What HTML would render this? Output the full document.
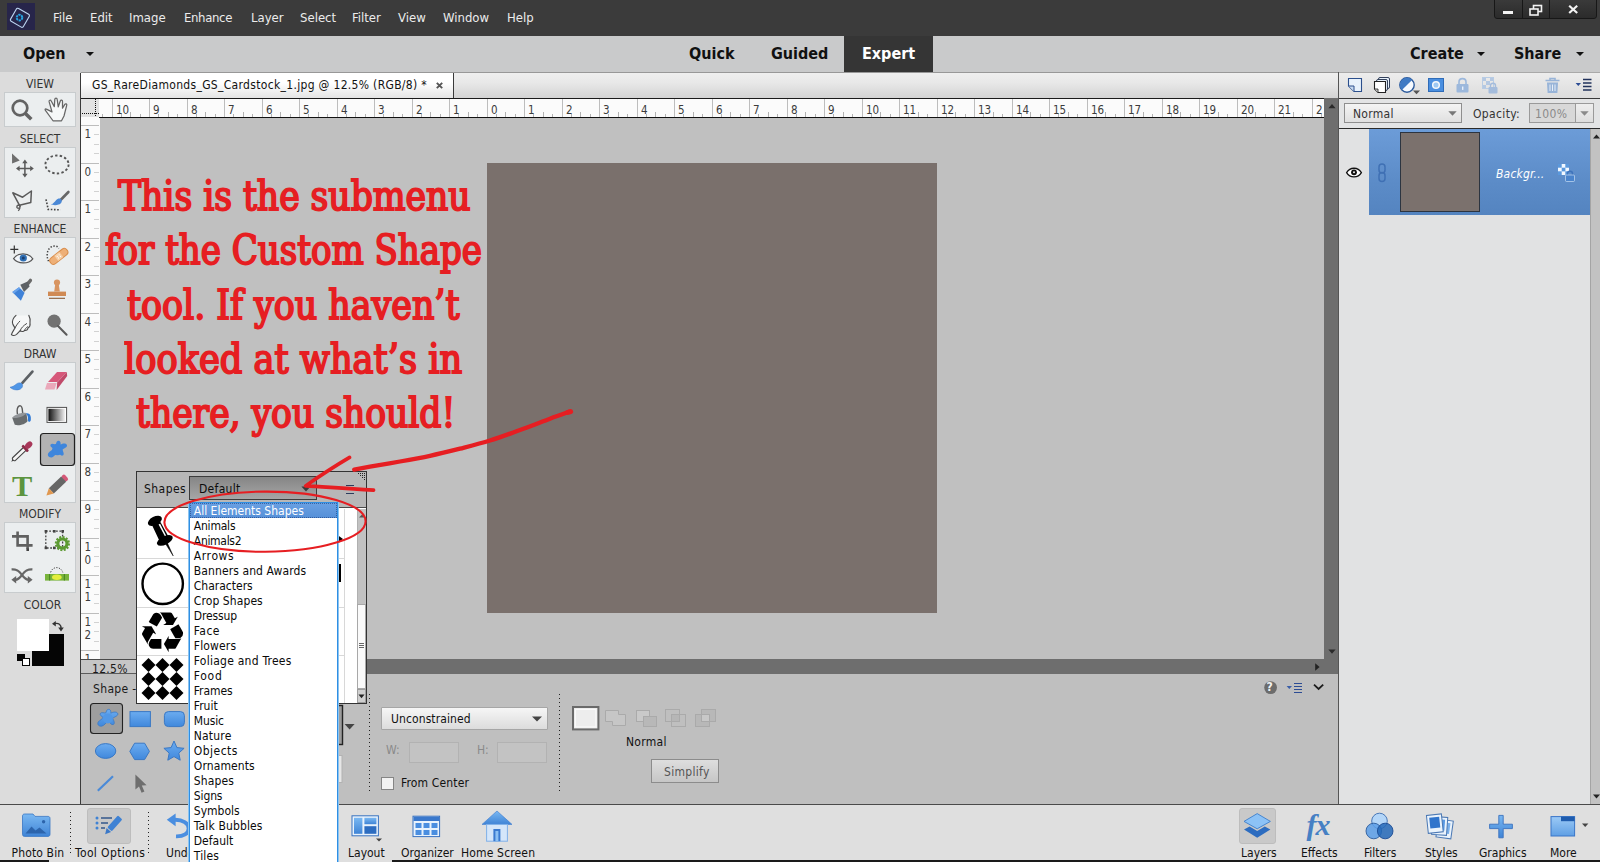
<!DOCTYPE html>
<html><head><meta charset="utf-8"><title>Photoshop Elements - Custom Shape submenu</title>
<style>
*{box-sizing:border-box;margin:0;padding:0}
html,body{width:1600px;height:862px;overflow:hidden;background:#bababa}
body{position:relative;font-family:"DejaVu Sans Condensed","Liberation Sans",sans-serif;font-size:12px;color:#1a1a1a}
.a{position:absolute}
.t{position:absolute;white-space:nowrap;line-height:14px}
svg{position:absolute;overflow:visible}
/* ---- top bars ---- */
#menubar{left:0;top:0;width:1600px;height:36px;background:#3b3b3b}
#menubar .t{color:#ececec;font-size:13px;top:10px;line-height:15px}
#modebar{left:0;top:36px;width:1600px;height:36px;background:#c9cacb}
#modebar .t{font-family:"DejaVu Sans Condensed","Liberation Sans",sans-serif;font-weight:bold;font-size:16px;line-height:20px;top:8px;color:#111}
.dn{position:absolute;width:0;height:0;border-left:4px solid transparent;border-right:4px solid transparent;border-top:4px solid #111}
/* ---- left toolbar ---- */
#toolbar{left:0;top:72px;width:81px;height:732px;background:#dcdcdc;border-right:1px solid #c4c4c4}
#toolbar .lbl{position:absolute;left:0;width:80px;text-align:center;font-size:12px;line-height:14px;color:#333}
#toolbar .grp{position:absolute;left:4px;width:72px;background:#ebeeef;border:1px solid #c8ccce}
/* ---- doc area ---- */
#tabbar{left:81px;top:72px;width:1257px;height:26px;background:linear-gradient(#efefef 0%,#e8e8e8 40%,#d3d3d3 100%);border-top:1px solid #989898}
#doctab{left:0;top:0;width:373px;height:25px;background:linear-gradient(#ffffff 40%,#e4e4e4);border-right:1px solid #3a3a3a}
#canvas{left:100px;top:118px;width:1224px;height:541px;background:#c0c0c0}
#photo{left:487px;top:163px;width:450px;height:450px;background:#7a706c}
#vscroll{left:1324px;top:98px;width:14px;height:562px;background:#6e6e6e}
#hstatus{left:81px;top:659px;width:1257px;height:15px;background:#6e6e6e}
#options{left:81px;top:674px;width:1257px;height:130px;background:#bfbfbf}
/* ---- right panel ---- */
#panel{left:1338px;top:72px;width:262px;height:732px;background:#e1e2e3;border-left:1px solid #555}
.li{left:3.8px;font-size:12px;letter-spacing:0;line-height:15px;color:#0a0a0a;margin-top:1px}
.red{font-family:"DejaVu Serif Condensed","DejaVu Serif","Liberation Serif",serif;font-weight:normal;-webkit-text-stroke:1.9px #e61e22;font-size:41px;line-height:50px;color:#e61e22;transform-origin:0 0}
/* ---- bottom bar ---- */
#taskbar{left:0;top:804px;width:1600px;height:58px;background:#dfdfdf;border-top:1px solid #4a4a4a}
.tk{top:846px;font-size:12px;letter-spacing:0;color:#111}
</style></head>
<body>
<!--MENUBAR-->
<div id="menubar" class="a">
<div class="a" style="left:7px;top:3px;width:28px;height:27px;background:#27254a"></div>
<svg style="left:7px;top:3px" width="28" height="27" viewBox="0 0 28 27"><rect x="-7.4" y="-7.4" width="14.8" height="14.8" rx="1.6" fill="none" stroke="#bcd6f2" stroke-width="1.1" transform="translate(12.9 14.8) rotate(30)"/><circle cx="12.5" cy="14.6" r="2.8" fill="none" stroke="#27a5e2" stroke-width="2" stroke-dasharray="2.2 .73"/></svg>
<span class="t" style="left:53px">File</span><span class="t" style="left:90px">Edit</span><span class="t" style="left:129px">Image</span><span class="t" style="left:184px;letter-spacing:-.35px">Enhance</span><span class="t" style="left:251px">Layer</span><span class="t" style="left:300px">Select</span><span class="t" style="left:352px">Filter</span><span class="t" style="left:398px">View</span><span class="t" style="left:443px">Window</span><span class="t" style="left:507px">Help</span>
<div class="a" style="left:1494px;top:-1px;width:103px;height:20px;background:linear-gradient(#3a3a3a,#2b2b2b);border:1px solid #171717;border-radius:0 0 3px 3px"></div>
<div class="a" style="left:1522px;top:0;width:1px;height:18px;background:#171717"></div><div class="a" style="left:1549px;top:0;width:1px;height:18px;background:#171717"></div>
<div class="a" style="left:1503px;top:11px;width:10px;height:3px;background:#f2f2f2"></div>
<svg style="left:1529px;top:4px" width="14" height="12" viewBox="0 0 14 12"><rect x="4.5" y="1.5" width="8" height="6" fill="none" stroke="#f2f2f2" stroke-width="1.6"/><rect x="1" y="5" width="8" height="6" fill="#2f2f2f" stroke="#f2f2f2" stroke-width="1.6"/></svg>
<svg style="left:1568px;top:5px" width="11" height="9" viewBox="0 0 11 9"><path d="M1.2 0.8 L9.2 8 M9.2 0.8 L1.2 8" stroke="#f2f2f2" stroke-width="2.2"/></svg>
</div>
<!--MODEBAR-->
<div id="modebar" class="a">
<span class="t" style="left:23px">Open</span><div class="dn" style="left:86px;top:16px"></div>
<span class="t" style="left:689px">Quick</span><span class="t" style="left:771px">Guided</span>
<div class="a" style="left:844px;top:0;width:89px;height:36px;background:#353535"></div>
<span class="t" style="left:862px;color:#fff">Expert</span>
<span class="t" style="left:1410px">Create</span><div class="dn" style="left:1477px;top:16px"></div>
<span class="t" style="left:1514px">Share</span><div class="dn" style="left:1576px;top:16px"></div>
</div>
<!--TOOLBAR-->
<div id="toolbar" class="a">
<span class="lbl" style="top:5px">VIEW</span>
<div class="grp" style="top:20px;height:35px"></div>
<span class="lbl" style="top:60px">SELECT</span>
<div class="grp" style="top:75px;height:71px"></div>
<span class="lbl" style="top:150px">ENHANCE</span>
<div class="grp" style="top:165px;height:106px"></div>
<span class="lbl" style="top:275px">DRAW</span>
<div class="grp" style="top:290px;height:141px"></div>
<span class="lbl" style="top:435px">MODIFY</span>
<div class="grp" style="top:450px;height:71px"></div>
<span class="lbl" style="top:526px;left:2.5px">COLOR</span>
</div>
<svg id="tools" style="left:0;top:0" width="81" height="700" viewBox="0 0 81 700">
<!-- zoom -->
<circle cx="20" cy="108" r="7.300" fill="none" stroke="#636363" stroke-width="2.700"/><path d="M25.400 113.500 L31.300 119.300" stroke="#636363" stroke-width="3.600"/>
<!-- hand -->
<path d="M53 120.750 L45.250 110.200 C44.800 109.200 45.600 108.600 46.400 109.100 L52 111.900 L49.100 101.700 C48.800 100.200 50.600 99.600 51.200 101 L54.300 106.600 L54.800 99.400 C55 97.700 57 97.700 57.200 99.400 L58.250 106.800 L60.300 101 C60.900 99.500 62.700 100 62.500 101.600 L62.500 108.200 L64.800 104.400 C65.600 103.200 67.200 104 66.700 105.400 L64 116 L61.500 120.750 Z" fill="#f6f8f8" stroke="#666" stroke-width="1.250" stroke-linejoin="round"/>
<!-- move -->
<path d="M12 153.600 L12.100 163.600 L19.700 160.400 Z" fill="#6e6e6e"/>
<path d="M24.9 161.5 V175.5 M17.9 168.5 H31.9" stroke="#5a5a5a" stroke-width="1.5"/><path d="M24.9 159.6 L22.2 163.2 H27.6 Z M24.9 177.4 L22.2 173.8 H27.6 Z M16 168.5 L19.6 165.8 V171.2 Z M33.8 168.5 L30.2 165.8 V171.2 Z" fill="#5a5a5a"/>
<!-- ellipse marquee -->
<ellipse cx="57" cy="164.500" rx="11.600" ry="9" fill="none" stroke="#555" stroke-width="1.900" stroke-dasharray="2.400 2.250"/>
<!-- lasso -->
<path d="M12.8 192.8 L22.6 197.2 L31.4 191 L30.8 202.4 L19.4 205.2 Z" fill="none" stroke="#5a5a5a" stroke-width="1.5" stroke-linejoin="round"/><path d="M19.6 205 C16 205 16.2 208.6 18.6 208.2 C21 207.8 20.6 204.6 19.2 205.2 C20.6 207 19.8 210 18 210.6" fill="none" stroke="#5a5a5a" stroke-width="1.3"/>
<!-- selection brush -->
<path d="M68.4 192 L60.6 200" stroke="#666" stroke-width="2.6" stroke-linecap="round"/><path d="M60.8 199 C62.6 200.4 62 203.6 58.6 204.6 C55.6 205.6 52.6 205 51 204.6 C53.6 203.6 54.6 201.6 56 200.2 C57.4 198.8 59.4 198 60.8 199 Z" fill="#4a88d6"/><path d="M46 199.4 L48.2 209.4 L60.4 209.8" fill="none" stroke="#444" stroke-width="1.6" stroke-dasharray="1.6 1.6"/>
<!-- red eye -->
<path d="M14.3 245.4 V253.4 M10.3 249.4 H18.3" stroke="#333" stroke-width="1.2"/>
<path d="M13.6 258.6 C17.6 252.4 28.4 252.2 32.8 258.8 C28.4 264.4 17.8 264.2 13.6 258.6 Z" fill="#f2f6fa" stroke="#555" stroke-width="1.2"/><circle cx="23.3" cy="258" r="3.6" fill="#2f6fb4"/><circle cx="23.3" cy="258" r="1.5" fill="#1b3f70"/>
<!-- healing -->
<path d="M48.6 261.2 C46.6 257.6 46.2 250.6 50.6 247.4 C54 245 57.8 246 58.8 248.4" fill="none" stroke="#444" stroke-width="1.5" stroke-dasharray="1.4 1.6"/>
<g transform="translate(58.8 256.4) rotate(-38)"><rect x="-10.4" y="-3.6" width="20.8" height="7.2" rx="3.4" fill="#eeb078" stroke="#d98e4c" stroke-width="1"/><rect x="-3.2" y="-3.2" width="6.4" height="6.4" fill="#f6d0a8"/><circle cx="-1.2" cy="-1" r=".6" fill="#fff"/><circle cx="1.2" cy="1" r=".6" fill="#fff"/><circle cx="1.2" cy="-1" r=".6" fill="#fff"/><circle cx="-1.2" cy="1" r=".6" fill="#fff"/></g>
<!-- smart brush -->
<path d="M30.400 280.400 L28 283.600" stroke="#6a6a6a" stroke-width="3.400" stroke-linecap="round"/><path d="M20.300 284.700 L27.600 281.400 L29.600 286.500 L24 292 Z" fill="#5e6266"/><path d="M12.300 292 L19 287.200 L24.600 292.700 L20.900 300.700 Z" fill="#3f82d8"/><path d="M12.300 292 L19 287.200 L20.400 288.600 L14 293.400 Z" fill="#6aa4ec"/>
<!-- stamp -->
<circle cx="57" cy="282.6" r="3.1" fill="#d89460"/><path d="M55.2 284.6 L54.2 291.6 H59.8 L58.8 284.6 Z" fill="#d89460"/><rect x="48" y="291.6" width="18" height="4.4" fill="#d08a54"/><path d="M49 298.3 H65" stroke="#8a5a34" stroke-width="1.1"/>
<!-- smudge finger -->
<path d="M16 315.400 C13 318 11.800 321 12.800 324 C13.400 325.600 14.400 326.800 15 328 C13.600 330.400 12 332.600 11.400 334.600 C12.600 335.900 15.200 335.700 16.600 334.400 L20.200 330.600 C21.600 332 23.600 331.800 24.600 330.400 C26.400 330.600 27.800 329.400 28 328 C29.600 327 30.400 325 30 323 C30.400 320 30 317.400 28.800 315.400" fill="#f6f7f7" stroke="#4a4a4a" stroke-width="1.100" stroke-linejoin="round" stroke-linecap="round"/><path d="M20.200 330.600 C21 328 23.400 325.600 26.600 323.600 M15 328 C16.400 325 18.400 322.600 19.800 321.200 M24.600 330.400 C25 328.800 26.200 327.600 27.600 326.800" fill="none" stroke="#4a4a4a" stroke-width="1" stroke-linecap="round"/>
<!-- dodge -->
<circle cx="54.100" cy="321.200" r="6.600" fill="#727272"/><path d="M58 326 L66.6 334.8" stroke="#5a5a5a" stroke-width="2" stroke-linecap="round"/>
<!-- brush -->
<path d="M32.4 371.600 L22.400 382.800" stroke="#5c6064" stroke-width="2.700" stroke-linecap="round"/><path d="M21.200 383.300 C23.400 384.600 23 388 19.600 389.400 C16.400 390.600 12.600 389.600 10 387.300 C13 386.800 14.800 385.400 16.200 384.200 C17.800 382.900 19.800 382.500 21.200 383.300 Z" fill="#4f96e6" stroke="#3a7acc" stroke-width=".6"/>
<!-- eraser -->
<path d="M57 372 H66.750 L57.500 382 H48 Z" fill="#d6587a"/><path d="M47 383 H56.750 L54.500 389.500 H45 Z" fill="#eaa8ba"/><path d="M66.750 372 L67.200 376 L56.600 390 L57.200 382.600 Z" fill="#c04a6a"/>
<!-- bucket -->
<path d="M17.4 414 C16 405.4 21.2 403.4 22.2 408.6 L23 416" fill="none" stroke="#5a5a5a" stroke-width="1.4"/><path d="M12.2 417.8 L26.400 413.200 L27.600 421 C25.400 424.600 18.600 426 14.800 424.800 Z" fill="#686c6e"/><path d="M12.2 417.800 C14.600 414.400 23 411.800 26.400 413.200 C24.600 416.200 15.600 419 12.200 417.800 Z" fill="#92969a"/><path d="M26 413.400 C29.600 412.600 31.400 415.600 30.800 420 C30.600 422.400 27.800 422.400 28 420 C28.200 417.200 27.800 415.200 26 413.400 Z" fill="#2f7ad6"/>
<!-- gradient -->
<defs><linearGradient id="gr" x1="0" x2="1"><stop offset="0" stop-color="#111"/><stop offset="1" stop-color="#f4f4f4"/></linearGradient></defs>
<rect x="47" y="407.4" width="19.6" height="15" fill="#fff" stroke="#505050" stroke-width="1"/><rect x="48.400" y="408.800" width="16.800" height="12.200" fill="url(#gr)"/>
<!-- eyedropper -->
<g transform="translate(13 460) rotate(-43.5)"><path d="M-2.4 0 L0.6 -1.1 V1.1 Z" fill="#444"/><rect x="0" y="-1.9" width="17" height="3.8" rx="1.6" fill="#f6f6f6" stroke="#454545" stroke-width="1.1"/><rect x="15.4" y="-4.2" width="2.8" height="8.400" rx="1" fill="#8c2c48"/><ellipse cx="21.6" cy="0" rx="4.200" ry="2.900" fill="#a8385a"/></g>
<!-- custom shape selected -->
<rect x="40.5" y="433.5" width="34" height="32" rx="3" fill="#b2b2b2" stroke="#222" stroke-width="1.2"/>
<path d="M57.6 441 C59.6 440 61 442 60.6 444.6 C62.6 443 66.6 442.8 67 445.2 C67.4 447.4 64 448.2 62.2 449.8 C63.6 452 64.6 455 62.6 455.6 C60.6 456.2 59.4 453.4 58 452.2 C56 453.6 54 457.2 51.4 457.4 C48.4 457.6 47 455.2 48.4 453 C49.6 451.2 52.4 450.6 53 448.6 C51.6 447.4 49.6 446.2 50.6 444.6 C51.8 443 54.4 444.6 55.8 444 C56.4 443 56.4 441.6 57.6 441 Z" fill="#3f86dc"/>
<circle cx="57.4" cy="450" r="5.200" fill="#3f86dc"/>
<!-- pencil -->
<g transform="translate(56.4 486) rotate(46.5)"><rect x="-3.6" y="-13.8" width="7.200" height="4.400" rx="2" fill="#d45878"/><rect x="-3.6" y="-10" width="7.200" height="17" fill="#666"/><path d="M-3.6 7 H3.600 L0 13.800 Z" fill="#e09850"/></g>
<!-- crop -->
<path d="M17.6 531.4 V545.4 H32.6 M12 536.4 H27.6 V549" fill="none" stroke="#606060" stroke-width="2.6"/><rect x="26.4" y="548.4" width="2.6" height="2.6" fill="#444"/>
<!-- recompose -->
<rect x="45.8" y="531.2" width="16.8" height="16.8" fill="none" stroke="#444" stroke-width="1.3" stroke-dasharray="1.8 1.6"/><rect x="44.6" y="530" width="2.6" height="2.6" fill="#444"/><rect x="61.4" y="530" width="2.6" height="2.6" fill="#444"/><rect x="44.6" y="546.6" width="2.6" height="2.6" fill="#444"/><rect x="53" y="530" width="2.6" height="2.6" fill="#444"/><rect x="53" y="546.6" width="2.6" height="2.6" fill="#444"/>
<circle cx="62.4" cy="543.6" r="4.6" fill="none" stroke="#5c9a32" stroke-width="3.2"/><circle cx="62.4" cy="543.6" r="6.6" fill="none" stroke="#5c9a32" stroke-width="2" stroke-dasharray="2 1.46"/>
<!-- content aware move -->
<path d="M11.6 569.4 C18 569 20 572.4 22 575 C24 577.6 26 580 29 579.8" fill="none" stroke="#666" stroke-width="2.2"/><path d="M32.6 579.8 L27.8 576 V583.6 Z" fill="#666"/><path d="M32.4 569.4 C26 569 24 572.4 22 575 C20 577.6 18 580 15 579.8" fill="none" stroke="#666" stroke-width="2.2"/><path d="M11.4 579.8 L16.2 576 V583.6 Z" fill="#666"/>
<!-- straighten -->
<path d="M50.6 572.4 C52.6 566 60.6 566 62.8 572.4" fill="none" stroke="#444" stroke-width="1" stroke-dasharray="1.2 1.4"/><rect x="45" y="574" width="24" height="6.6" fill="#78b43c"/><ellipse cx="56.800" cy="577.300" rx="4.800" ry="2.700" fill="#e4ee3c"/><path d="M49.6 574 V580.6 M64.4 574 V580.6" stroke="#4c8a22" stroke-width="1.2"/>
<!-- colour swatches -->
<rect x="32" y="634" width="32" height="32" fill="#050505"/><rect x="17" y="619" width="32" height="32" fill="#fff"/>
<rect x="17" y="654" width="8" height="7" fill="#050505"/><rect x="22.5" y="658.5" width="7" height="7" fill="#fff" stroke="#050505" stroke-width="1"/>
<path d="M54.4 623.6 C58.6 622.6 61.4 624.6 61 628.6" fill="none" stroke="#333" stroke-width="1.4"/><path d="M52 623.8 L55.8 621 V626.6 Z M61 631.6 L58.2 627.6 H63.8 Z" fill="#333"/>
</svg>
<span class="t" style="left:11.6px;top:470.5px;font-family:'Liberation Serif',serif;font-weight:bold;font-size:29.5px;line-height:31px;color:#5c9440;transform:scaleX(1.03);transform-origin:0 0">T</span>
<!--TABBAR-->
<div id="tabbar" class="a"><div id="doctab" class="a"><span class="t" style="left:11px;top:5px;font-size:12px;letter-spacing:.32px;color:#111">GS_RareDiamonds_GS_Cardstock_1.jpg @ 12.5% (RGB/8) *</span><svg style="left:355px;top:9px" width="7" height="7" viewBox="0 0 7 7"><path d="M0.8 0.8L6.2 6.2M6.2 0.8L0.8 6.2" stroke="#555" stroke-width="1.9"/></svg></div></div>
<!--RULERS-->
<div class="a" style="left:81px;top:98px;width:1244px;height:20px;background:#fbfbfb;border-top:1px solid #1a1a1a"></div><div class="a" style="left:99px;top:117px;width:1226px;height:1px;background:#111"></div><div class="a" style="left:80px;top:73px;width:1px;height:731px;background:#3a3a3a"></div>
<div class="a" style="left:81px;top:118px;width:19px;height:541px;background:#fbfbfb"></div>
<div class="a" style="left:81px;top:99px;width:18px;height:18px;background:#e2e2e2"></div>
<div class="a" style="left:0;top:0;width:1325px;height:659px;overflow:hidden"><svg id="rulers" style="left:0;top:0" width="1325" height="660" viewBox="0 0 1325 660" font-family="'DejaVu Sans Condensed','Liberation Sans',sans-serif" font-size="11.5" fill="#3c3c3c"><path d="M95.5 99 V117 M82 113.5 H99" stroke="#111" stroke-width="1" stroke-dasharray="1 1" fill="none"/><path d="M112.5 99V117 M149.5 99V117 M187.5 99V117 M224.5 99V117 M262.5 99V117 M299.5 99V117 M337.5 99V117 M374.5 99V117 M412.5 99V117 M449.5 99V117 M487.5 99V117 M524.5 99V117 M562.5 99V117 M599.5 99V117 M637.5 99V117 M674.5 99V117 M712.5 99V117 M749.5 99V117 M787.5 99V117 M824.5 99V117 M862.5 99V117 M899.5 99V117 M937.5 99V117 M974.5 99V117 M1012.5 99V117 M1049.5 99V117 M1087.5 99V117 M1124.5 99V117 M1162.5 99V117 M1199.5 99V117 M1237.5 99V117 M1274.5 99V117 M1312.5 99V117" stroke="#bdbdbd" stroke-width="1"/><path d="M121.5 114V117 M140.5 114V117 M158.5 114V117 M177.5 114V117 M196.5 114V117 M215.5 114V117 M233.5 114V117 M252.5 114V117 M271.5 114V117 M290.5 114V117 M308.5 114V117 M327.5 114V117 M346.5 114V117 M365.5 114V117 M383.5 114V117 M402.5 114V117 M421.5 114V117 M440.5 114V117 M458.5 114V117 M477.5 114V117 M496.5 114V117 M515.5 114V117 M533.5 114V117 M552.5 114V117 M571.5 114V117 M590.5 114V117 M608.5 114V117 M627.5 114V117 M646.5 114V117 M665.5 114V117 M683.5 114V117 M702.5 114V117 M721.5 114V117 M740.5 114V117 M758.5 114V117 M777.5 114V117 M796.5 114V117 M815.5 114V117 M833.5 114V117 M852.5 114V117 M871.5 114V117 M890.5 114V117 M908.5 114V117 M927.5 114V117 M946.5 114V117 M965.5 114V117 M983.5 114V117 M1002.5 114V117 M1021.5 114V117 M1040.5 114V117 M1058.5 114V117 M1077.5 114V117 M1096.5 114V117 M1115.5 114V117 M1133.5 114V117 M1152.5 114V117 M1171.5 114V117 M1190.5 114V117 M1208.5 114V117 M1227.5 114V117 M1246.5 114V117 M1265.5 114V117 M1283.5 114V117 M1302.5 114V117 M1321.5 114V117 M102.5 114V117 M130.5 112V117 M168.5 112V117 M205.5 112V117 M243.5 112V117 M280.5 112V117 M318.5 112V117 M355.5 112V117 M393.5 112V117 M430.5 112V117 M468.5 112V117 M505.5 112V117 M543.5 112V117 M580.5 112V117 M618.5 112V117 M655.5 112V117 M693.5 112V117 M730.5 112V117 M768.5 112V117 M805.5 112V117 M843.5 112V117 M880.5 112V117 M918.5 112V117 M955.5 112V117 M993.5 112V117 M1030.5 112V117 M1068.5 112V117 M1105.5 112V117 M1143.5 112V117 M1180.5 112V117 M1218.5 112V117 M1255.5 112V117 M1293.5 112V117" stroke="#b2b2b2" stroke-width="1"/><text x="116" y="113.5">10</text><text x="153" y="113.5">9</text><text x="191" y="113.5">8</text><text x="228" y="113.5">7</text><text x="266" y="113.5">6</text><text x="303" y="113.5">5</text><text x="341" y="113.5">4</text><text x="378" y="113.5">3</text><text x="416" y="113.5">2</text><text x="453" y="113.5">1</text><text x="491" y="113.5">0</text><text x="528" y="113.5">1</text><text x="566" y="113.5">2</text><text x="603" y="113.5">3</text><text x="641" y="113.5">4</text><text x="678" y="113.5">5</text><text x="716" y="113.5">6</text><text x="753" y="113.5">7</text><text x="791" y="113.5">8</text><text x="828" y="113.5">9</text><text x="866" y="113.5">10</text><text x="903" y="113.5">11</text><text x="941" y="113.5">12</text><text x="978" y="113.5">13</text><text x="1016" y="113.5">14</text><text x="1053" y="113.5">15</text><text x="1091" y="113.5">16</text><text x="1128" y="113.5">17</text><text x="1166" y="113.5">18</text><text x="1203" y="113.5">19</text><text x="1241" y="113.5">20</text><text x="1278" y="113.5">21</text><text x="1316" y="113.5">2</text><path d="M81 125.5H99 M81 163.5H99 M81 200.5H99 M81 238.5H99 M81 275.5H99 M81 313.5H99 M81 350.5H99 M81 388.5H99 M81 425.5H99 M81 463.5H99 M81 500.5H99 M81 538.5H99 M81 575.5H99 M81 613.5H99 M81 650.5H99" stroke="#bdbdbd" stroke-width="1"/><path d="M94 134.5H99 M94 144.5H99 M94 153.5H99 M94 172.5H99 M94 181.5H99 M94 191.5H99 M94 209.5H99 M94 219.5H99 M94 228.5H99 M94 247.5H99 M94 256.5H99 M94 266.5H99 M94 284.5H99 M94 294.5H99 M94 303.5H99 M94 322.5H99 M94 331.5H99 M94 341.5H99 M94 359.5H99 M94 369.5H99 M94 378.5H99 M94 397.5H99 M94 406.5H99 M94 416.5H99 M94 434.5H99 M94 444.5H99 M94 453.5H99 M94 472.5H99 M94 481.5H99 M94 491.5H99 M94 509.5H99 M94 519.5H99 M94 528.5H99 M94 547.5H99 M94 556.5H99 M94 566.5H99 M94 584.5H99 M94 594.5H99 M94 603.5H99 M94 622.5H99 M94 631.5H99 M94 641.5H99" stroke="#d2d2d2" stroke-width="1"/><text x="84.5" y="138.0">1</text><text x="84.5" y="176.0">0</text><text x="84.5" y="213.0">1</text><text x="84.5" y="251.0">2</text><text x="84.5" y="288.0">3</text><text x="84.5" y="326.0">4</text><text x="84.5" y="363.0">5</text><text x="84.5" y="401.0">6</text><text x="84.5" y="438.0">7</text><text x="84.5" y="476.0">8</text><text x="84.5" y="513.0">9</text><text x="84.5" y="551.0">1</text><text x="84.5" y="563.5">0</text><text x="84.5" y="588.0">1</text><text x="84.5" y="600.5">1</text><text x="84.5" y="626.0">1</text><text x="84.5" y="638.5">2</text><text x="84.5" y="663.0">1</text></svg></div>
<!--/RULERS-->
<!--CANVAS-->
<div id="canvas" class="a"></div>
<div id="photo" class="a"></div>
<div id="vscroll" class="a"></div>
<div id="hstatus" class="a"></div>
<!--OPTIONS-->
<div id="options" class="a"></div>
<div class="a" style="left:81px;top:659px;width:55px;height:15px;background:#c6c6c6;border-top:1px solid #4a4a4a;border-bottom:1px solid #5c5c5c"></div>
<span class="t" style="left:92px;top:662px;font-size:12px;letter-spacing:.3px">12.5%</span>
<svg style="left:1314px;top:662px" width="8" height="10" viewBox="0 0 8 10"><path d="M1.2 1.2 L5.6 5 L1.2 8.8Z" fill="#222"/></svg>
<svg style="left:1327px;top:102px" width="10" height="8" viewBox="0 0 10 8"><path d="M1.4 6.2 L5 2 L8.600 6.2Z" fill="#2a2a2a"/></svg>
<svg style="left:1327px;top:648px" width="10" height="8" viewBox="0 0 10 8"><path d="M1.4 1.6 L5 5.8 L8.600 1.6Z" fill="#2a2a2a"/></svg>
<span class="t" style="left:93px;top:682px;font-size:12px;letter-spacing:.35px">Shape -</span>
<svg id="optsvg" style="left:0;top:0" width="1340" height="810" viewBox="0 0 1340 810"><defs><linearGradient id="sb" x1="0" y1="0" x2="0" y2="1"><stop offset="0" stop-color="#6cacf0"/><stop offset="1" stop-color="#4088dc"/></linearGradient></defs>
<rect x="90.5" y="703.5" width="32" height="30" rx="3" fill="#9e9e9e" stroke="#222" stroke-width="1.1"/>
<path d="M107.6 709.6 C109.8 708.6 111.2 710.6 110.8 713.2 C112.8 711.8 117.4 711.4 117.8 713.8 C118.2 716 114.4 716.8 112.6 718.4 C114 720.6 115.2 723.8 113.2 724.6 C111.2 725.2 109.6 722.2 108.2 721 C106.2 722.4 104 726 101.4 726.2 C98.2 726.4 97 723.8 98.4 721.8 C99.6 720 102.4 719.4 103 717.4 C101.6 716.2 99.4 715 100.4 713.4 C101.6 711.8 104.4 713.4 105.8 712.8 C106.4 711.8 106.4 710.2 107.6 709.6 Z" fill="url(#sb)" stroke="#3a78c4" stroke-width=".8"/>
<circle cx="107.8" cy="718.4" r="5" fill="#5298e6"/><rect x="130" y="711.6" width="20.4" height="15" fill="url(#sb)" stroke="#3a78c4" stroke-width="1"/>
<rect x="164.4" y="711.6" width="20" height="15" rx="4" fill="url(#sb)" stroke="#3a78c4" stroke-width="1"/>
<ellipse cx="105.6" cy="751" rx="10.2" ry="7.4" fill="url(#sb)" stroke="#3a78c4" stroke-width="1"/>
<path d="M129.8 751.4 L134.6 743.2 H144.6 L149.4 751.4 L144.6 759.6 H134.6 Z" fill="url(#sb)" stroke="#3a78c4" stroke-width="1"/>
<path d="M174.0 741.0 L176.9 747.6 L184.1 748.3 L178.8 753.1 L180.2 760.2 L174.0 756.6 L167.8 760.2 L169.2 753.1 L163.9 748.3 L171.1 747.6 Z" fill="url(#sb)" stroke="#3a78c4" stroke-width="1"/>
<path d="M97.8 790.8 L113 776.2" stroke="#4a8ad8" stroke-width="2.2"/>
<path d="M135.4 774.4 L135.4 789.6 L139 786.4 L141.6 792.8 L144.4 791.6 L141.8 785.4 L146.6 785.2 Z" fill="#6e6e6e"/>
<path d="M369.5 694 V793 M559.5 694 V793" stroke="#222" stroke-width="1" stroke-dasharray="1 3" fill="none"/>
<!-- shape picker behind list -->
<rect x="330" y="705.5" width="12.500" height="39" fill="#9c9c9c" stroke="#222" stroke-width="1.4"/>
<path d="M344.6 724 H354.6 L349.6 729.4 Z" fill="#444"/>
<rect x="330" y="755.5" width="12" height="27" fill="#e6e6e6" stroke="#b2b2b2" stroke-width="1"/>
<!-- W/H boxes -->
<rect x="409.5" y="742.5" width="49" height="20" fill="#c3c3c3" stroke="#b2b2b2" stroke-width="1"/>
<rect x="497.5" y="742.5" width="49" height="20" fill="#c3c3c3" stroke="#b2b2b2" stroke-width="1"/>
<rect x="381.5" y="777.5" width="12" height="12" fill="#f2f2f2" stroke="#858585" stroke-width="1"/>
<!-- mode buttons -->
<rect x="573" y="707" width="25.4" height="22.4" fill="#ededed" stroke="#6a6a6a" stroke-width="2"/><rect x="575.5" y="709.5" width="20.4" height="17.4" fill="none" stroke="#fafafa" stroke-width="1"/>
<g fill="#c6c6c6" stroke="#aaa" stroke-width="1"><path d="M605.5 710.5 H618.5 V714.5 H625.5 V725.5 H612.5 V721.5 H605.5 Z"/>
<rect x="636.5" y="710.5" width="13" height="11" fill="#c9c9c9"/><rect x="643.5" y="716.5" width="13" height="10" fill="#b8b8b8"/>
<rect x="665.5" y="709.5" width="14" height="12" fill="none"/><rect x="671.5" y="714.5" width="14" height="12" fill="none"/><rect x="671.5" y="714.5" width="8" height="7" fill="#b6b6b6"/>
<rect x="695.5" y="714.5" width="14" height="12" fill="#b8b8b8"/><rect x="701.5" y="709.5" width="14" height="12" fill="#b8b8b8"/><rect x="701.5" y="714.5" width="8" height="7" fill="#c8c8c8"/></g>
</svg>
<div class="a" style="left:381px;top:707px;width:167px;height:23px;background:linear-gradient(#f6f6f6,#dcdcdc);border:1px solid #a6a6a6;border-radius:1px"></div>
<span class="t" style="left:391px;top:712px;font-size:12px;letter-spacing:.1px;color:#111">Unconstrained</span>
<svg style="left:532px;top:716px" width="10" height="6" viewBox="0 0 10 6"><path d="M0 0.4 H10 L5 5.6 Z" fill="#444"/></svg>
<span class="t" style="left:386px;top:743px;font-size:12px;color:#8a8a8a">W:</span><span class="t" style="left:477px;top:743px;font-size:12px;color:#8a8a8a">H:</span>
<span class="t" style="left:401px;top:776px;font-size:12px;letter-spacing:.15px;color:#111">From Center</span>
<span class="t" style="left:626px;top:735px;font-size:12px;letter-spacing:.3px;color:#111">Normal</span>
<div class="a" style="left:651px;top:759px;width:68px;height:24px;background:linear-gradient(#dedede,#c6c6c6);border:1px solid #8c8c8c"></div>
<span class="t" style="left:664px;top:765px;font-size:12px;letter-spacing:.3px;color:#555">Simplify</span>
<svg style="left:1262px;top:679px" width="66" height="18" viewBox="0 0 66 18"><circle cx="8.6" cy="8.6" r="6.4" fill="#6c6c6c"/><path d="M24.6 7 H30 L27.3 10 Z" fill="#3a5ea8"/><path d="M32 4.5 H40 M32 7.5 H40 M32 10.5 H40 M32 13.5 H40" stroke="#2c4c94" stroke-width="1.2"/><path d="M52 5.6 L56.6 10 L61.2 5.6" fill="none" stroke="#1c1c1c" stroke-width="1.8"/></svg>
<span class="t" style="left:1266.500px;top:680px;font-size:12px;font-weight:bold;color:#f2f2f2;line-height:14px">?</span>
<!--PANEL-->
<div id="panel" class="a">
<div class="a" style="left:0;top:0;width:261px;height:27px;background:linear-gradient(#ededed,#dcdcdc);border-top:1px solid #a9a9a9;border-bottom:1px solid #3a3a3a"></div>
<div class="a" style="left:0;top:27px;width:261px;height:30px;background:#e3e4e5;border-bottom:1px solid #2a2a2a"></div>
<svg style="left:-1339px;top:-72px" width="1600" height="220" viewBox="0 0 1600 220">
<!-- new layer -->
<path d="M1348.5 78.5 H1361.5 V91.5 H1354 L1348.5 86 Z" fill="#e8f2fc" stroke="#2c4f8c" stroke-width="1.1"/><path d="M1348.5 86 H1354 V91.5" fill="#c8dcf2" stroke="#2c4f8c" stroke-width="1"/>
<!-- group -->
<rect x="1378.5" y="77.5" width="11" height="11" rx="1.5" fill="#e8f2fc" stroke="#33415c" stroke-width="1"/><rect x="1376.500" y="79.5" width="11" height="11" rx="1.5" fill="#e8f2fc" stroke="#33415c" stroke-width="1"/><path d="M1374.500 81.500 H1385.500 V92.500 H1378 L1374.500 89 Z" fill="#fff" stroke="#222" stroke-width="1.1"/><path d="M1374.500 89 H1378 V92.500" fill="#ccc" stroke="#222" stroke-width=".8"/>
<!-- adjustment -->
<circle cx="1407" cy="85" r="7.2" fill="#f6faff" stroke="#2c5a9c" stroke-width="1.4"/><path d="M1401.9 90.100 A7.2 7.2 0 0 1 1412.100 79.900 Z" fill="#3f7ac4"/><path d="M1413 90.500 H1420 L1416.500 94.300 Z" fill="#555"/>
<!-- mask -->
<rect x="1428.500" y="78.500" width="15" height="13" fill="#4a8fe0" stroke="#2f6cb8" stroke-width="1"/><circle cx="1436" cy="85" r="3.300" fill="#9cc8f4" stroke="#f4f8fc" stroke-width="1.500"/>
<!-- lock -->
<path d="M1459 84 V82 C1459 77.500 1466 77.500 1466 82 V84" fill="none" stroke="#9cb8dc" stroke-width="1.600"/><rect x="1456.500" y="84" width="12" height="8.500" rx="1" fill="#9cb8dc"/><rect x="1462" y="86.500" width="1.400" height="3.400" fill="#e8f0fa"/>
<!-- transparency lock -->
<g fill="#b4c8e2"><rect x="1482" y="77" width="4" height="4"/><rect x="1490" y="77" width="4" height="4"/><rect x="1486" y="81" width="4" height="4"/><rect x="1482" y="85" width="4" height="4"/></g><rect x="1482.500" y="77.500" width="11" height="11" fill="none" stroke="#b8cce4" stroke-width="1"/>
<path d="M1490.500 87 V85.500 C1490.500 82.500 1495.500 82.500 1495.500 85.500 V87" fill="none" stroke="#a4bcdc" stroke-width="1.400"/><rect x="1488.500" y="87" width="9" height="6.500" rx="1" fill="#a4bcdc"/>
<!-- trash -->
<path d="M1545.500 80.500 H1559.500 M1550 80 V78.500 H1555 V80" fill="none" stroke="#98b4d8" stroke-width="1.600"/><path d="M1547 82.500 H1558 L1557.400 93 H1547.600 Z" fill="#98b4d8"/><path d="M1550 84.500 V91 M1552.500 84.500 V91 M1555 84.500 V91" stroke="#e6eef8" stroke-width="1"/>
<!-- panel menu -->
<path d="M1575.600 83 H1581 L1578.300 86 Z" fill="#2c4c94"/><path d="M1583 79.500 H1591.500 M1583 83 H1591.500 M1583 86.500 H1591.500 M1583 90 H1591.500" stroke="#22335c" stroke-width="1.300"/>
<!-- eye -->
<path d="M1346.600 172.600 C1350 166.800 1358 166.800 1361.400 172.600 C1358 178.200 1350 178.200 1346.600 172.600 Z" fill="#fff" stroke="#111" stroke-width="1.300"/><circle cx="1354" cy="172.300" r="2.900" fill="#111"/><circle cx="1354" cy="172.300" r="1" fill="#eee"/>
</svg>
<div class="a" style="left:5px;top:31px;width:118px;height:20px;background:linear-gradient(#f4f4f4,#e0e0e0);border:1px solid #8e8e8e"></div>
<span class="t" style="left:14px;top:35px;font-size:12px;letter-spacing:.3px;color:#333">Normal</span>
<svg style="left:109px;top:39px" width="9" height="5" viewBox="0 0 9 5"><path d="M0.300 0.300 H8.700 L4.500 4.700 Z" fill="#777"/></svg>
<span class="t" style="left:134px;top:35px;font-size:12px;letter-spacing:.35px;color:#333">Opacity:</span>
<div class="a" style="left:190px;top:31px;width:65px;height:20px;background:#d8d8d8;border:1px solid #9a9a9a"></div>
<div class="a" style="left:236px;top:32px;width:18px;height:18px;background:linear-gradient(#eee,#dedede);border-left:1px solid #9a9a9a"></div>
<span class="t" style="left:196px;top:35px;font-size:12px;letter-spacing:.4px;color:#8a8a8a">100%</span>
<svg style="left:241px;top:39px" width="9" height="5" viewBox="0 0 9 5"><path d="M0.300 0.300 H8.700 L4.500 4.700 Z" fill="#8a8a8a"/></svg>
<!-- layer row -->
<div class="a" style="left:30px;top:57px;width:221px;height:86px;background:linear-gradient(#6c9cd8,#5c8cc8 60%,#5484c0)"></div>
<div class="a" style="left:61px;top:60px;width:80px;height:80px;background:#7b716d;border:1px solid #2c3440"></div>
<svg style="left:37px;top:90px" width="12" height="22" viewBox="0 0 12 22"><rect x="3" y="2" width="6" height="9" rx="3" fill="none" stroke="#3f70b4" stroke-width="1.500"/><rect x="3" y="10.500" width="6" height="9" rx="3" fill="none" stroke="#3f70b4" stroke-width="1.500"/></svg>
<span class="t" style="left:157px;top:95px;font-size:12px;font-style:italic;letter-spacing:.2px;color:#fff">Backgr...</span>
<svg style="left:218px;top:91px" width="20" height="20" viewBox="0 0 20 20"><rect x="1" y="1" width="11" height="11" fill="#f2f8ff"/><g fill="#5a98dc"><rect x="1" y="1" width="3.700" height="3.700"/><rect x="8.300" y="1" width="3.700" height="3.700"/><rect x="4.700" y="4.700" width="3.700" height="3.700"/><rect x="1" y="8.300" width="3.700" height="3.700"/><rect x="8.300" y="8.300" width="3.700" height="3.700"/></g><path d="M10.500 12 V10.500 C10.500 7.500 15.500 7.500 15.500 10.500 V12" fill="none" stroke="#3f74bc" stroke-width="1.500"/><rect x="8.500" y="12" width="9" height="6.500" rx="1" fill="#4a84cc" stroke="#dcebfa" stroke-width=".6"/></svg>
<!-- panel scrollbar -->
<div class="a" style="left:251px;top:57px;width:10px;height:675px;background:#c2c2c2;border-left:1px solid #a4a4a4"></div>
<svg style="left:254px;top:62px" width="7" height="5" viewBox="0 0 7 5"><path d="M0 4.500 L3.500 0.500 L7 4.500 Z" fill="#222"/></svg>
<svg style="left:254px;top:722px" width="7" height="5" viewBox="0 0 7 5"><path d="M0 0.500 L3.500 4.500 L7 0.500 Z" fill="#222"/></svg>
</div>
<!--TASKBAR-->
<div id="taskbar" class="a"></div>
<div class="a" style="left:0;top:860px;width:49px;height:2px;background:#1a1a1a"></div><div class="a" style="left:392px;top:860px;width:1208px;height:2px;background:#1a1a1a"></div>
<div class="a" style="left:87px;top:808px;width:44px;height:36px;background:#c9c9c9;border:1px solid #bdbdbd;border-radius:3px"></div>
<div class="a" style="left:1239px;top:808px;width:37px;height:36px;background:#c9c9c9;border:1px solid #bdbdbd;border-radius:3px"></div>
<svg id="tasksvg" style="left:0;top:800px" width="1600" height="62" viewBox="0 800 1600 62">
<defs><linearGradient id="bl" x1="0" y1="0" x2="0" y2="1"><stop offset="0" stop-color="#7ab8f2"/><stop offset="1" stop-color="#3f84d6"/></linearGradient><linearGradient id="bl2" x1="0" y1="0" x2="0" y2="1"><stop offset="0" stop-color="#9ccaf6"/><stop offset="1" stop-color="#5f9fe4"/></linearGradient></defs>
<path d="M70.500 812 V855 M148.500 812 V855" stroke="#222" stroke-width="1" stroke-dasharray="1 3" fill="none"/>
<!-- photo bin -->
<path d="M22.500 816 C22.500 814.800 23.300 814 24.500 814 H33 L35 816.400 H48 C49.300 816.400 50 817.200 50 818.400 V834.400 C50 835.600 49.200 836.400 48 836.400 H24.500 C23.300 836.400 22.500 835.600 22.500 834.400 Z" fill="url(#bl)" stroke="#3876c4" stroke-width=".8"/><path d="M25.500 833.400 L31.500 826.400 L35.500 830.400 L39.500 827.400 L46.500 833.400 Z" fill="#2c64ac"/><circle cx="43.600" cy="821.800" r="1.700" fill="#2c64ac"/>
<!-- tool options -->
<g fill="#3f82d4"><circle cx="97" cy="818" r="1.500"/><circle cx="97" cy="823" r="1.500"/><circle cx="97" cy="828" r="1.500"/></g><path d="M101 818 H112 M101 823 H108 M101 828 H105" stroke="#34588c" stroke-width="1.300"/>
<g transform="translate(112.500 826) rotate(42)"><rect x="-3" y="-11.500" width="6" height="16" rx="1.200" fill="#3f82d4"/><path d="M-3 5.500 H3 L0 11 Z" fill="#3a78c8"/></g>
<!-- undo -->
<path d="M174 819.800 C183 819.400 188.600 823.400 188.600 828.400 C188.600 833.600 183.500 836.600 176 836.400" fill="none" stroke="#4a8ee0" stroke-width="3.800"/><path d="M166.800 819.800 L175.600 813.400 V826.200 Z" fill="#4a8ee0"/>
<!-- layout -->
<rect x="352" y="815.800" width="26.400" height="20" fill="#e8f2fc" stroke="#3872c0" stroke-width="1"/><rect x="354" y="817.800" width="8.400" height="16" fill="url(#bl)"/><rect x="364.400" y="817.800" width="12" height="6.400" fill="url(#bl)"/><rect x="364.400" y="826.200" width="12" height="7.600" fill="#2c6cc0"/><path d="M376 838.400 H382 L379 841.600 Z" fill="#444"/>
<!-- organizer -->
<rect x="413" y="816.200" width="26.600" height="20.400" fill="#e8f2fc" stroke="#3872c0" stroke-width="1"/><rect x="413.500" y="816.700" width="25.600" height="4.300" fill="#3a78cc"/><g fill="#4a8ee0"><rect x="415.500" y="823" width="6" height="5"/><rect x="423.500" y="823" width="6" height="5"/><rect x="431.500" y="823" width="6" height="5"/><rect x="415.500" y="830" width="6" height="5"/><rect x="423.500" y="830" width="6" height="5"/><rect x="431.500" y="830" width="6" height="5"/></g>
<!-- home -->
<path d="M482 824.400 L497 811 L512 824.400 Z" fill="url(#bl)" stroke="#3a7ad0" stroke-width=".6"/><rect x="486.600" y="824.400" width="20.800" height="16.800" fill="#d4e6fa" stroke="#7fb0e8" stroke-width="1"/><rect x="493.400" y="829" width="7" height="12.200" fill="#3a7ad0"/><rect x="495.400" y="831" width="3" height="10.200" fill="#8cc0f4"/>
<!-- layers -->
<path d="M1244 829.600 L1249.600 826.600 L1257.200 831 L1264.800 826.600 L1270.400 829.600 L1257.200 837.800 Z" fill="#2c6cc0"/><path d="M1244 821.400 L1257.200 813.600 L1270.400 821.400 L1257.200 828.800 Z" fill="#8cc2f6" stroke="#3c7ecc" stroke-width=".9"/>
<!-- filters -->
<circle cx="1379.500" cy="821" r="7.800" fill="#b4d6f8" stroke="#3a6cb0" stroke-width=".9"/><circle cx="1373.800" cy="831" r="7.800" fill="#5a9ee8" fill-opacity=".85" stroke="#2c5c9c" stroke-width=".9"/><circle cx="1385.200" cy="831" r="7.800" fill="#2468b8" fill-opacity=".85" stroke="#1c4c94" stroke-width=".9"/>
<!-- styles -->
<g transform="rotate(8 1445 830)"><rect x="1437" y="820" width="15" height="18" fill="#eaf3fc" stroke="#4a78b4" stroke-width="1"/><rect x="1439.500" y="822.500" width="10" height="11" fill="#7ab0ea"/></g>
<g transform="rotate(4 1441 828)"><rect x="1432" y="817" width="15" height="18" fill="#eaf3fc" stroke="#4a78b4" stroke-width="1"/><rect x="1434.500" y="819.500" width="10" height="11" fill="#5a9ae4"/></g>
<g transform="rotate(-6 1436 825)"><rect x="1427.500" y="814.500" width="15" height="18" fill="#eaf3fc" stroke="#4a78b4" stroke-width="1"/><rect x="1430" y="817" width="10" height="11" fill="#2f74cc"/></g>
<!-- graphics -->
<path d="M1498.800 815.400 H1503.200 V824.200 H1512.400 V828.600 H1503.200 V837.800 H1498.800 V828.600 H1489.600 V824.200 H1498.800 Z" fill="url(#bl)" stroke="#3a72c0" stroke-width=".9"/>
<!-- more -->
<rect x="1551" y="816.600" width="23.600" height="19.400" fill="url(#bl2)" stroke="#3a76c8" stroke-width="1"/><rect x="1561" y="816.600" width="13.600" height="4.600" fill="#1f5cae"/><path d="M1582 823.600 H1588.400 L1585.200 827 Z" fill="#444"/>
</svg>
<span class="t" style="left:1306.5px;top:807px;font-family:'Liberation Serif',serif;font-style:italic;font-weight:bold;font-size:30px;line-height:36px;color:#4680c4;letter-spacing:-1px">fx</span>
<span class="t tk" style="left:11.5px;letter-spacing:.15px">Photo Bin</span><span class="t tk" style="left:75px;letter-spacing:.37px">Tool Options</span><span class="t tk" style="left:166px">Undo</span>
<span class="t tk" style="left:348px">Layout</span><span class="t tk" style="left:401px">Organizer</span><span class="t tk" style="left:461px;letter-spacing:.16px">Home Screen</span>
<span class="t tk" style="left:1241px">Layers</span><span class="t tk" style="left:1301px">Effects</span><span class="t tk" style="left:1364px">Filters</span><span class="t tk" style="left:1425px">Styles</span><span class="t tk" style="left:1479px">Graphics</span><span class="t tk" style="left:1550px">More</span>
<div id="popup" class="a" style="left:136px;top:471px;width:231px;height:233px;background:#fff;border:1px solid #333">
<div class="a" style="left:0;top:0;width:229px;height:36px;background:#b7b7b7;border-bottom:1px solid #4a4a4a"></div>
<span class="t" style="left:7px;top:10px;font-size:12px;letter-spacing:.45px;color:#111">Shapes</span>
<div class="a" style="left:52px;top:4px;width:128px;height:24px;background:linear-gradient(#858585,#a6a6a6);border:1px solid #3c3c3c"></div>
<span class="t" style="left:62px;top:10px;font-size:12px;letter-spacing:.3px;color:#0c0c0c">Default</span>
<svg style="left:164px;top:14px" width="10" height="6" viewBox="0 0 10 6"><path d="M0.4 0.4 H9.6 L5 5.6 Z" fill="#3c3c3c"/></svg>
<svg style="left:208px;top:12px" width="10" height="12" viewBox="0 0 10 12"><path d="M1 1.5 H9 M1 5.5 H9 M1 9.5 H9" stroke="#2c3c5c" stroke-width="1.1"/></svg>
<svg style="left:219px;top:0" width="10" height="9" viewBox="0 0 10 9"><path d="M2 1.5 H10 M4 3.5 H10 M6 5.5 H10 M8 7.5 H10" stroke="#222" stroke-width="1" stroke-dasharray="1 1"/></svg>
<!-- scrollbar -->
<div class="a" style="left:220px;top:37px;width:9px;height:194px;background:#c2c2c2;border-left:1px solid #b0b0b0"></div>
<div class="a" style="left:220px;top:132px;width:9px;height:85px;background:#fafafa;border:1px solid #a8a8a8"></div>
<svg style="left:221px;top:170px" width="7" height="8" viewBox="0 0 7 8"><path d="M1 1.5 H6 M1 3.5 H6 M1 5.5 H6" stroke="#666" stroke-width="1"/></svg>
<div class="a" style="left:220px;top:217px;width:9px;height:14px;background:#cfcfcf;border:1px solid #9c9c9c"></div>
<svg style="left:221px;top:222px" width="7" height="5" viewBox="0 0 7 5"><path d="M0.5 0.5 H6.5 L3.5 4.2 Z" fill="#222"/></svg>
<svg style="left:222px;top:42px" width="6" height="4" viewBox="0 0 6 4"><path d="M0 3.6 L3 0.4 L6 3.6 Z" fill="#555"/></svg>
<!-- grid lines -->
<div class="a" style="left:0;top:86px;width:208px;height:1px;background:#d8d8d8"></div><div class="a" style="left:0;top:135px;width:208px;height:1px;background:#d8d8d8"></div><div class="a" style="left:0;top:183px;width:208px;height:1px;background:#d8d8d8"></div>
<div class="a" style="left:207px;top:37px;width:1px;height:194px;background:#d8d8d8"></div>
<svg style="left:0;top:37px" width="215" height="194" viewBox="137 508 215 194">
<!-- pushpin -->
<g transform="translate(162.6 535) rotate(-27)"><ellipse cx="0" cy="-17" rx="7.6" ry="4.2" fill="#000"/><path d="M-4.4 -15 L-5 3 H5 L4.4 -15 Z" fill="#000"/><path d="M1.6 -12 L2 1.500 L3.300 1.500 L3.300 -12 Z" fill="#fff"/><ellipse cx="0" cy="5" rx="8.6" ry="4.200" fill="#000"/><path d="M-0.900 8 L0.400 22.500 L1.100 8 Z" fill="#000" stroke="#000" stroke-width=".5"/></g>
<circle cx="162.7" cy="582.8" r="20.2" fill="#fff" stroke="#000" stroke-width="2.4"/>
<text x="162.6" y="650.8" text-anchor="middle" font-family="'DejaVu Sans',sans-serif" font-size="56.5" fill="#000">♻</text>
<!-- second column peeks -->
<path d="M337.5 534 L343 538 L337.5 543 Z" fill="#000"/><path d="M337.5 563 H341 V581 H337.5 Z" fill="#000"/>
</svg>
<svg style="left:5px;top:187px" width="44" height="44" viewBox="0 0 44 44">
<g fill="#000"><path d="M6.5 -1 l7 7 l-7 7 l-7 -7 Z"/><path d="M20.5 -1 l7 7 l-7 7 l-7 -7 Z"/><path d="M34.5 -1 l7 7 l-7 7 l-7 -7 Z"/><path d="M6.5 13 l7 7 l-7 7 l-7 -7 Z"/><path d="M20.5 13 l7 7 l-7 7 l-7 -7 Z"/><path d="M34.5 13 l7 7 l-7 7 l-7 -7 Z"/><path d="M6.5 27 l7 7 l-7 7 l-7 -7 Z"/><path d="M20.5 27 l7 7 l-7 7 l-7 -7 Z"/><path d="M34.5 27 l7 7 l-7 7 l-7 -7 Z"/></g></svg>
</div>
<div id="ddlist" class="a" style="left:189px;top:502px;width:149px;height:362px;background:#fff;border:1px solid #2f8fe4;border-bottom:none;box-shadow:1px 0 0 #8cc4f0,-1px 0 0 #8cc4f0"><div class="a" style="left:0;top:0;width:147px;height:15px;background:linear-gradient(#6aa0e2,#5690d8);outline:1px dotted rgba(20,50,110,.55);outline-offset:-1px"></div><span class="t li" style="top:0px;color:#fff">All Elements Shapes</span><span class="t li" style="top:15px;letter-spacing:-0.21px">Animals</span><span class="t li" style="top:30px;letter-spacing:-0.30px">Animals2</span><span class="t li" style="top:45px;letter-spacing:0.60px">Arrows</span><span class="t li" style="top:60px;letter-spacing:0.10px">Banners and Awards</span><span class="t li" style="top:75px">Characters</span><span class="t li" style="top:90px;letter-spacing:0.09px">Crop Shapes</span><span class="t li" style="top:105px;letter-spacing:-0.13px">Dressup</span><span class="t li" style="top:120px;letter-spacing:0.46px">Face</span><span class="t li" style="top:135px;letter-spacing:0.15px">Flowers</span><span class="t li" style="top:150px;letter-spacing:0.25px">Foliage and Trees</span><span class="t li" style="top:165px;letter-spacing:0.70px">Food</span><span class="t li" style="top:180px;letter-spacing:-0.08px">Frames</span><span class="t li" style="top:195px">Fruit</span><span class="t li" style="top:210px;letter-spacing:-0.12px">Music</span><span class="t li" style="top:225px;letter-spacing:0.18px">Nature</span><span class="t li" style="top:240px;letter-spacing:0.47px">Objects</span><span class="t li" style="top:255px;letter-spacing:0.10px">Ornaments</span><span class="t li" style="top:270px;letter-spacing:0.14px">Shapes</span><span class="t li" style="top:285px;letter-spacing:-0.12px">Signs</span><span class="t li" style="top:300px">Symbols</span><span class="t li" style="top:315px;letter-spacing:0.14px">Talk Bubbles</span><span class="t li" style="top:330px">Default</span><span class="t li" style="top:345px;letter-spacing:0.17px">Tiles</span></div>
<div id="annot" class="a" style="left:0;top:0;width:0;height:0"><span class="t red" style="left:117.6px;top:171.0px;transform:scaleX(0.9380)">This is the submenu</span><span class="t red" style="left:105px;top:225.3px;transform:scaleX(0.9232)">for the Custom Shape</span><span class="t red" style="left:126.8px;top:279.6px;transform:scaleX(0.9456)">tool. If you haven’t</span><span class="t red" style="left:123.9px;top:334.0px;transform:scaleX(0.9545)">looked at what’s in</span><span class="t red" style="left:135.6px;top:388.2px;transform:scaleX(0.9373)">there, you should!</span>
<svg style="left:0;top:0" width="700" height="600" viewBox="0 0 700 600">
<ellipse cx="265" cy="521.700" rx="100.600" ry="30.100" fill="none" stroke="#e61e22" stroke-width="2.100" transform="rotate(-0.3 265 521.7)"/>
<path d="M568.7 412.0 C565.6 413.1 558.1 415.7 550.0 418.7 C541.9 421.7 530.0 426.4 520.0 430.0 C510.0 433.6 500.0 437.4 490.0 440.5 C480.0 443.6 470.0 446.1 460.0 448.7 C450.0 451.2 440.0 453.7 430.0 455.8 C420.0 457.9 410.0 459.7 400.0 461.5 C390.0 463.3 377.6 465.3 370.0 466.7 C362.4 468.1 356.8 469.2 354.2 469.7" fill="none" stroke="#e61e22" stroke-width="4.300" stroke-linecap="round"/>
<ellipse cx="569" cy="411.900" rx="4.200" ry="2.700" fill="#e61e22" transform="rotate(-15 569.4 411.8)"/>
<path d="M349.600 457.400 C335 466 319 476.500 305.600 485.900 C320 486.400 338 488.200 373.600 490.100" fill="none" stroke="#e61e22" stroke-width="3.600" stroke-linecap="round" stroke-linejoin="round"/>
</svg></div>
</body></html>
